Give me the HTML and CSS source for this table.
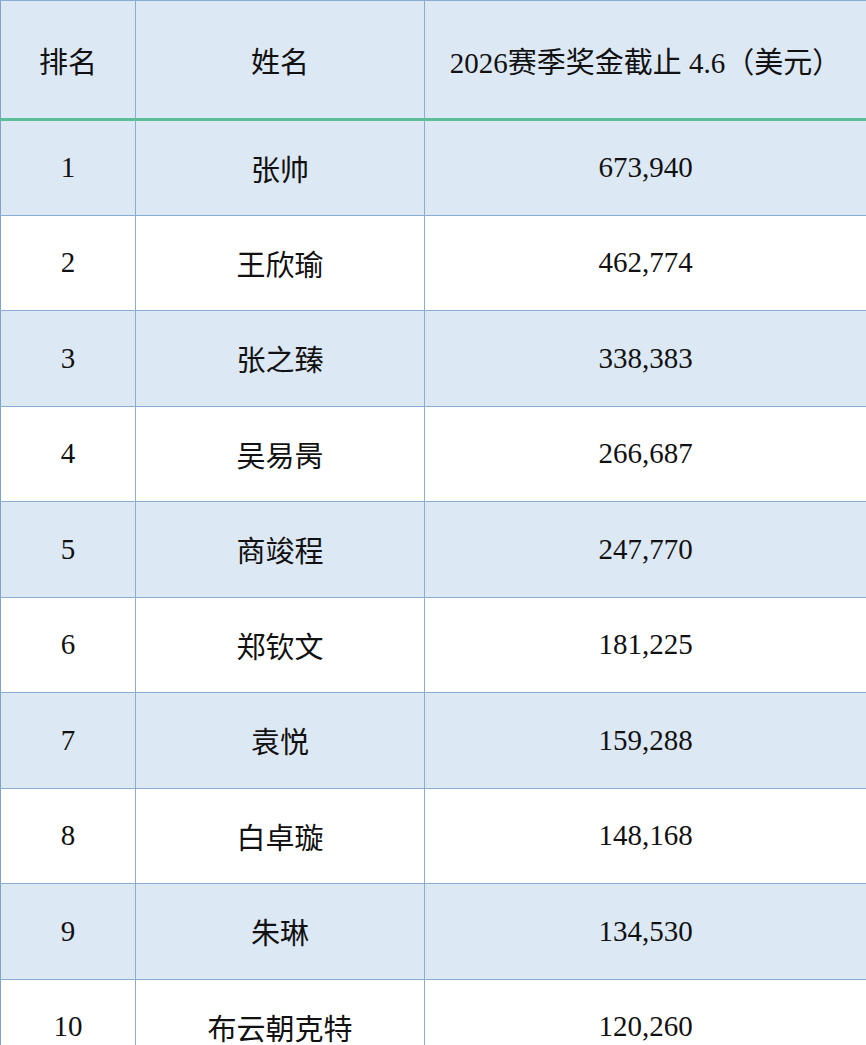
FILE: index.html
```html
<!DOCTYPE html>
<html lang="zh">
<head>
<meta charset="utf-8">
<title>2026赛季奖金</title>
<link rel="stylesheet" href="styles.css">
</head>
<body>
<table class="rank-table">
  <colgroup>
    <col class="c-rank">
    <col class="c-name">
    <col class="c-prize">
  </colgroup>
  <thead>
    <tr class="head-row">
      <th class="cjk">排名</th>
      <th class="cjk">姓名</th>
      <th class="mixed">2026赛季奖金截止 4.6（美元）</th>
    </tr>
  </thead>
  <tbody>
    <tr class="alt"><td class="num">1</td><td class="cjk">张帅</td><td class="num">673,940</td></tr>
    <tr><td class="num">2</td><td class="cjk">王欣瑜</td><td class="num">462,774</td></tr>
    <tr class="alt"><td class="num">3</td><td class="cjk">张之臻</td><td class="num">338,383</td></tr>
    <tr><td class="num">4</td><td class="cjk">吴易昺</td><td class="num">266,687</td></tr>
    <tr class="alt"><td class="num">5</td><td class="cjk">商竣程</td><td class="num">247,770</td></tr>
    <tr><td class="num">6</td><td class="cjk">郑钦文</td><td class="num">181,225</td></tr>
    <tr class="alt"><td class="num">7</td><td class="cjk">袁悦</td><td class="num">159,288</td></tr>
    <tr><td class="num">8</td><td class="cjk">白卓璇</td><td class="num">148,168</td></tr>
    <tr class="alt"><td class="num">9</td><td class="cjk">朱琳</td><td class="num">134,530</td></tr>
    <tr><td class="num">10</td><td class="cjk">布云朝克特</td><td class="num">120,260</td></tr>
  </tbody>
</table>
</body>
</html>
```
FILE: styles.css
```css
html, body {
  margin: 0;
  padding: 0;
  background: #ffffff;
}

.rank-table {
  width: 866px;
  border-collapse: collapse;
  table-layout: fixed;
  color: #111111;
}

.c-rank { width: 135px; }
.c-name { width: 289px; }
.c-prize { width: 442px; }

.rank-table th,
.rank-table td {
  border: 1px solid #8aadd2;
  text-align: center;
  vertical-align: middle;
  padding: 0;
  font-weight: normal;
  font-size: 29px;
}

.rank-table th:first-child,
.rank-table td:first-child {
  border-left-color: #7ea3c9;
}

.head-row th {
  height: 117px;
  background: #dde8f5;
  border-bottom: 3px solid #5dbd98;
}

.rank-table tbody tr {
  height: 95.5px;
}

.rank-table tr.alt td {
  background: #dde8f5;
}

.cjk {
  font-family: "Noto Sans CJK SC", "Noto Sans", sans-serif;
}

.num {
  font-family: "Liberation Serif", "Times New Roman", serif;
  font-size: 31px;
}

.mixed {
  font-family: "Liberation Serif", "Noto Sans CJK SC", serif;
  font-size: 30px;
}
```
